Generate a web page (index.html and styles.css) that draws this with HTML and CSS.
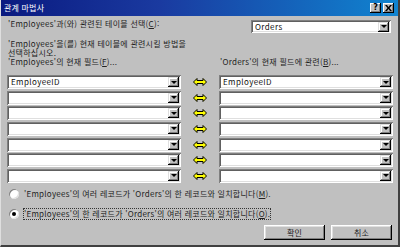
FILE: index.html
```html
<!DOCTYPE html>
<html lang="ko">
<head>
<meta charset="utf-8">
<title>관계 마법사</title>
<link rel="stylesheet" href="styles.css">
</head>
<body>
<div class="window">
  <div class="titlebar">
    <span class="title">관계 마법사</span>
    <div class="tb-buttons">
      <span class="tb-btn help">?</span>
      <span class="tb-btn close"><svg width="7" height="6" viewBox="0 0 7 6"><path d="M0 0h2l1.5 2 1.5-2h2L4.5 3 7 6H5L3.5 4 2 6H0l2.5-3z" fill="#000"/></svg></span>
    </div>
  </div>
  <div class="body">
    <div class="top">
      <div class="top-text">
        <div class="line1">'Employees'과(와) 관련된 테이블 선택(<u>C</u>):</div>
        <div class="desc">'Employees'을(를) 현재 테이블에 관련시킬 방법을<br>선택하십시오.</div>
      </div>
      <div class="combo table-combo"><span class="val">Orders</span><span class="drop"><i></i></span></div>
    </div>
    <div class="cols hdrs">
      <div class="hdr">'Employees'의 현재 필드(<u>F</u>)...</div>
      <div></div>
      <div class="hdr">'Orders'의 현재 필드에 관련(<u>B</u>)...</div>
    </div>
    <div class="cols rows">
      <div class="combo"><span class="val">EmployeeID</span><span class="drop"><i></i></span></div>
      <div class="arrow"><svg width="14" height="8" viewBox="0 0 14 8"><path d="M0.5 4L4 0.5V2.5H10V0.5L13.5 4L10 7.5V5.5H4V7.5Z" fill="#ffff00" stroke="#000" stroke-width="1"/></svg></div>
      <div class="combo"><span class="val">EmployeeID</span><span class="drop"><i></i></span></div>

      <div class="combo"><span class="val"></span><span class="drop"><i></i></span></div>
      <div class="arrow"><svg width="14" height="8" viewBox="0 0 14 8"><path d="M0.5 4L4 0.5V2.5H10V0.5L13.5 4L10 7.5V5.5H4V7.5Z" fill="#ffff00" stroke="#000" stroke-width="1"/></svg></div>
      <div class="combo"><span class="val"></span><span class="drop"><i></i></span></div>

      <div class="combo"><span class="val"></span><span class="drop"><i></i></span></div>
      <div class="arrow"><svg width="14" height="8" viewBox="0 0 14 8"><path d="M0.5 4L4 0.5V2.5H10V0.5L13.5 4L10 7.5V5.5H4V7.5Z" fill="#ffff00" stroke="#000" stroke-width="1"/></svg></div>
      <div class="combo"><span class="val"></span><span class="drop"><i></i></span></div>

      <div class="combo"><span class="val"></span><span class="drop"><i></i></span></div>
      <div class="arrow"><svg width="14" height="8" viewBox="0 0 14 8"><path d="M0.5 4L4 0.5V2.5H10V0.5L13.5 4L10 7.5V5.5H4V7.5Z" fill="#ffff00" stroke="#000" stroke-width="1"/></svg></div>
      <div class="combo"><span class="val"></span><span class="drop"><i></i></span></div>

      <div class="combo"><span class="val"></span><span class="drop"><i></i></span></div>
      <div class="arrow"><svg width="14" height="8" viewBox="0 0 14 8"><path d="M0.5 4L4 0.5V2.5H10V0.5L13.5 4L10 7.5V5.5H4V7.5Z" fill="#ffff00" stroke="#000" stroke-width="1"/></svg></div>
      <div class="combo"><span class="val"></span><span class="drop"><i></i></span></div>

      <div class="combo"><span class="val"></span><span class="drop"><i></i></span></div>
      <div class="arrow"><svg width="14" height="8" viewBox="0 0 14 8"><path d="M0.5 4L4 0.5V2.5H10V0.5L13.5 4L10 7.5V5.5H4V7.5Z" fill="#ffff00" stroke="#000" stroke-width="1"/></svg></div>
      <div class="combo"><span class="val"></span><span class="drop"><i></i></span></div>

      <div class="combo"><span class="val"></span><span class="drop"><i></i></span></div>
      <div class="arrow"><svg width="14" height="8" viewBox="0 0 14 8"><path d="M0.5 4L4 0.5V2.5H10V0.5L13.5 4L10 7.5V5.5H4V7.5Z" fill="#ffff00" stroke="#000" stroke-width="1"/></svg></div>
      <div class="combo"><span class="val"></span><span class="drop"><i></i></span></div>
    </div>
    <div class="radios">
      <div class="radio"><span class="dot"></span><span class="rlabel">'Employees'의 여러 레코드가 'Orders'의 한 레코드와 일치합니다(<u>M</u>).</span></div>
      <div class="radio checked"><span class="dot"></span><span class="rlabel focus">'Employees'의 한 레코드가 'Orders'의 여러 레코드와 일치합니다(<u>O</u>).</span></div>
    </div>
    <div class="buttons">
      <span class="btn">확인</span>
      <span class="btn">취소</span>
    </div>
  </div>
</div>
</body>
</html>
```

FILE: styles.css
```css
* { box-sizing: border-box; }
html, body { margin: 0; padding: 0; }
body {
  width: 400px;
  height: 247px;
  overflow: hidden;
  background: #c0c0c0;
  font-family: "Noto Sans CJK KR", "Noto Sans", sans-serif;
  font-size: 8px;
  letter-spacing: 0.25px;
  color: #222;
}
u { text-decoration: underline; text-underline-offset: 1px; }

.window {
  width: 400px;
  height: 247px;
  display: flex;
  flex-direction: column;
  background: #c0c0c0;
  border-left: 1px solid #dfdfdf;
  border-right: 2px solid #404040;
  border-bottom: 2px solid #404040;
}

.titlebar {
  height: 16px;
  flex: none;
  display: flex;
  align-items: center;
  justify-content: space-between;
  padding: 0 4px 0 3px;
  background: linear-gradient(90deg, #0a1a80 0%, #1a3aa0 40%, #1084d0 100%);
}
.title {
  color: #fff;
  font-size: 8px;
  line-height: 10px;
  letter-spacing: 0.2px;
}
.tb-buttons { display: flex; gap: 2px; }
.tb-btn {
  width: 11px;
  height: 10px;
  background: #c0c0c0;
  display: flex;
  align-items: center;
  justify-content: center;
  font-family: "DejaVu Sans", sans-serif;
  font-weight: bold;
  font-size: 8px;
  letter-spacing: 0;
  line-height: 1;
  color: #000;
  box-shadow: inset -1px -1px #000, inset 1px 1px #fff, inset -2px -2px #808080;
}

.body {
  flex: 1;
  display: flex;
  flex-direction: column;
  padding: 3px 6px 0 6px;
}

.top {
  display: flex;
  justify-content: space-between;
  align-items: flex-start;
}
.line1 { line-height: 10px; white-space: nowrap; padding-left: 1px; }
.desc { margin-top: 9.5px; line-height: 9px; white-space: nowrap; padding-left: 1px; }

.combo {
  height: 14px;
  background: #fff;
  display: flex;
  align-items: center;
  justify-content: space-between;
  padding: 2px 2px 2px 4px;
  box-shadow: inset 1px 1px #808080, inset -1px -1px #fff, inset 2px 2px #606060, inset -2px -2px #dfdfdf;
}
.table-combo { width: 140px; height: 13px; margin-top: 1px; margin-right: 1px; }
.val { font-size: 8px; line-height: 10px; color: #111; letter-spacing: 0.4px; }
.drop {
  width: 11px;
  height: 10px;
  flex: none;
  background: #c0c0c0;
  display: flex;
  align-items: center;
  justify-content: center;
  box-shadow: inset -1px -1px #000, inset 1px 1px #dfdfdf, inset -2px -2px #808080, inset 2px 2px #fff;
}
.drop i {
  width: 0;
  height: 0;
  border-left: 3px solid transparent;
  border-right: 3px solid transparent;
  border-top: 3px solid #000;
}

.cols {
  display: grid;
  grid-template-columns: 174px 38px 174px;
}
.hdrs { margin-top: 0; line-height: 9px; }
.hdr { white-space: nowrap; padding-left: 1px; }
.hdrs .hdr:last-child { padding-left: 1px; }
.rows {
  margin-top: 9.5px;
  grid-auto-rows: 14px;
  row-gap: 1.67px;
}
.arrow {
  display: flex;
  align-items: center;
  justify-content: center;
}

.radios {
  margin-top: 5px;
  display: flex;
  flex-direction: column;
  gap: 8px;
}
.radio {
  display: flex;
  align-items: center;
  height: 12px;
  gap: 5px;
  padding-left: 2px;
}
.dot {
  width: 10px;
  height: 10px;
  border-radius: 50%;
  background: #fff;
  flex: none;
  display: flex;
  align-items: center;
  justify-content: center;
  box-shadow: inset 1px 1px #808080, inset -1px -1px #dfdfdf;
}
.checked .dot::after {
  content: "";
  width: 4px;
  height: 4px;
  border-radius: 50%;
  background: #000;
}
.rlabel { white-space: nowrap; line-height: 10px; }
.focus { outline: 1px dotted #333; outline-offset: 0; }

.buttons {
  margin-top: 5px;
  display: flex;
  justify-content: flex-end;
  gap: 6px;
}
.btn {
  width: 61px;
  height: 15px;
  display: flex;
  align-items: center;
  justify-content: center;
  font-size: 8px;
  background: #c0c0c0;
  box-shadow: inset -1px -1px #000, inset 1px 1px #fff, inset -2px -2px #808080, inset 2px 2px #dfdfdf;
}
```
